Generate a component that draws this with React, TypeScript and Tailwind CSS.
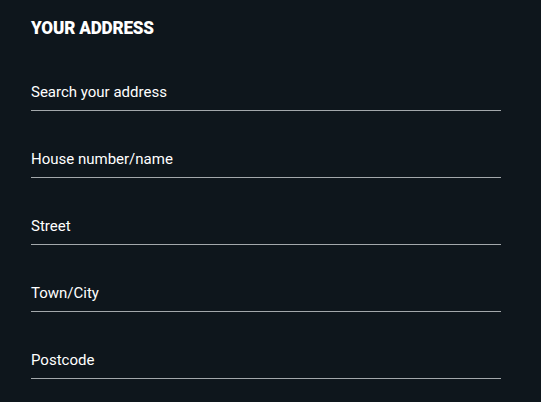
const fields = ['Search your address', 'House number/name', 'Street', 'Town/City', 'Postcode'];

export default function App() {
  return (
    <div className="w-[541px] h-[402px] bg-[#0e161c] overflow-hidden pl-[31px] pt-[16px]" style={{ fontFamily: 'Roboto, "Liberation Sans", sans-serif' }}>
      <h2 className="h-[24px]">
        <span className="inline-block origin-left scale-x-[0.9] text-[19px] leading-[24px] font-black text-white tracking-[-0.2px] uppercase">
          Your Address
        </span>
      </h2>
      <div className="mt-[42px] w-[470px] flex flex-col gap-[38px]">
        {fields.map((f) => (
          <label key={f} className="block border-b border-[#a3a8ab] pb-[8px]">
            <span className="block text-[15px] leading-[20px] text-white">{f}</span>
          </label>
        ))}
      </div>
    </div>
  );
}
